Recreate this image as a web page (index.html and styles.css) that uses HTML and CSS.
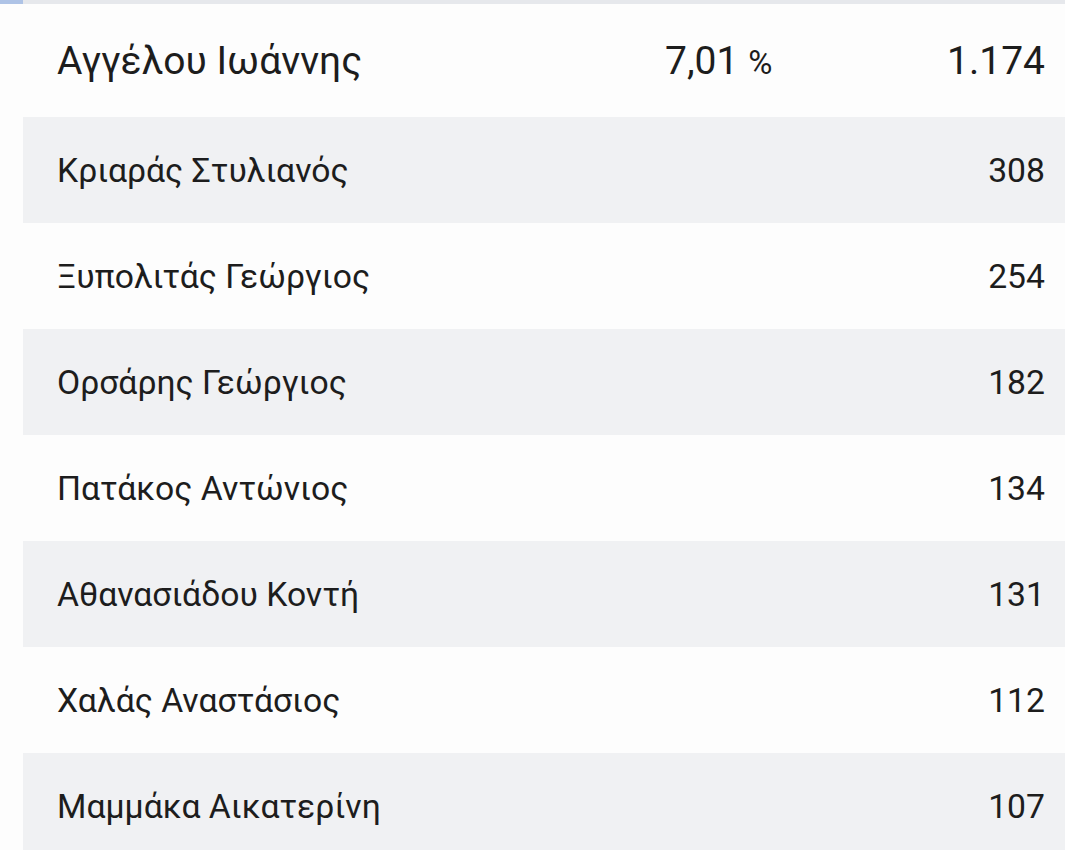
FILE: index.html
```html
<html>

<head>
    <meta name="viewport" content="width=device-width, initial-scale=1.0">
    <title>Σταυροί προτίμησης</title>
    <link rel="stylesheet" href="styles.css">
</head>

<body>
    <div class="top-bar">
        <span class="top-tab"></span>
    </div>
    <div class="list">
        <div class="row head">
            <span class="name">Αγγέλου Ιωάννης</span>
            <span class="percent">7,01 <small>%</small></span>
            <span class="votes">1.174</span>
        </div>
        <div class="row odd">
            <span class="name">Κριαράς Στυλιανός</span>
            <span class="votes">308</span>
        </div>
        <div class="row">
            <span class="name">Ξυπολιτάς Γεώργιος</span>
            <span class="votes">254</span>
        </div>
        <div class="row odd">
            <span class="name">Ορσάρης Γεώργιος</span>
            <span class="votes">182</span>
        </div>
        <div class="row">
            <span class="name">Πατάκος Αντώνιος</span>
            <span class="votes">134</span>
        </div>
        <div class="row odd">
            <span class="name">Αθανασιάδου Κοντή</span>
            <span class="votes">131</span>
        </div>
        <div class="row">
            <span class="name">Χαλάς Αναστάσιος</span>
            <span class="votes">112</span>
        </div>
        <div class="row odd">
            <span class="name">Μαμμάκα Αικατερίνη</span>
            <span class="votes">107</span>
        </div>
    </div>
</body>

</html>
```

FILE: styles.css
```css
body {
    margin: 0;
    padding: 0;
    background-color: #fdfdfd;
    font-family: Roboto, "Noto Sans", sans-serif;
    color: #1d1d1d;
    overflow: hidden;
}

.top-bar {
    height: 4px;
    background-color: #e6e8ec;
    display: flex;
}

.top-tab {
    width: 23px;
    background-color: #aec3e6;
}

.list {
    padding-left: 23px;
}

.row {
    display: flex;
    align-items: center;
    height: 106px;
    padding: 0 20px 0 34px;
    font-size: 33.7px;
}

.row.head {
    height: 113px;
    font-size: 39px;
}

.row.odd {
    background-color: #f0f1f3;
}

.name {
    flex: 1;
}

.percent {
    width: 282px;
}

.percent small {
    font-size: 33px;
}

.votes {
    text-align: right;
}
```
